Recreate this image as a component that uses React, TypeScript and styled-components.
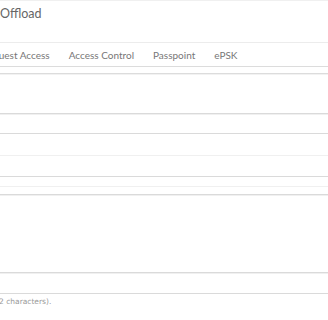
import React from 'react';
import styled, { createGlobalStyle } from 'styled-components';

const GlobalStyle = createGlobalStyle`
  html, body {
    margin: 0;
    padding: 0;
    background: #fff;
    overflow: hidden;
  }
  body {
    font-family: Lato, "Liberation Sans", sans-serif;
  }
`;

const Page = styled.div`
  width: 328px;
  height: 320px;
  overflow: hidden;
  border-top: 1px solid #f0f0f0;
  box-sizing: border-box;
`;

const Title = styled.h2`
  margin: 0;
  padding: 5px 0 0 0;
  height: 36px;
  font-size: 12.5px;
  font-weight: 400;
  color: #666;
  line-height: 16px;
`;

const TabBar = styled.nav`
  display: flex;
  height: 25px;
  border-top: 1px solid #ececec;
  border-bottom: 1px solid #dcdcdc;
  margin-left: -18px;
  box-sizing: border-box;
`;

const Tab = styled.span`
  display: flex;
  align-items: center;
  padding: 0 9.5px;
  font-size: 10px;
  color: #777;
  white-space: nowrap;
`;

const Panel = styled.div`
  margin-top: 6px;
  border-top: 1px solid #dcdcdc;
  box-shadow: inset 0 1px 0 #f2f2f2;
`;

const Field = styled.div<{ $gap: number; $height: number }>`
  margin-top: ${(p) => p.$gap}px;
  height: ${(p) => p.$height}px;
  border-top: 1px solid #dadada;
  border-bottom: 1px solid #dadada;
  box-shadow: inset 0 1px 0 #f0f0f0;
  box-sizing: border-box;
  & + & {
    border-top: none;
  }
`;

const Help = styled.p`
  margin: 3px 0 0 -1px;
  font-family: "DejaVu Sans", Verdana, sans-serif;
  font-size: 7.5px;
  color: #999;
`;

const tabs = ['Guest Access', 'Access Control', 'Passpoint', 'ePSK'];

const App: React.FC = () => {
  return (
    <Page>
      <GlobalStyle />
      <Title>Offload</Title>
      <TabBar>
        {tabs.map((t) => (
          <Tab key={t}>{t}</Tab>
        ))}
      </TabBar>
      <Panel>
        <Field $gap={39} $height={21} />
        <Field $gap={21} $height={22} />
        <Field $gap={9} $height={9} />
        <Field $gap={0} $height={78} />
        <Field $gap={0} $height={21} />
      </Panel>
      <Help>2 characters).</Help>
    </Page>
  );
};

export default App;
